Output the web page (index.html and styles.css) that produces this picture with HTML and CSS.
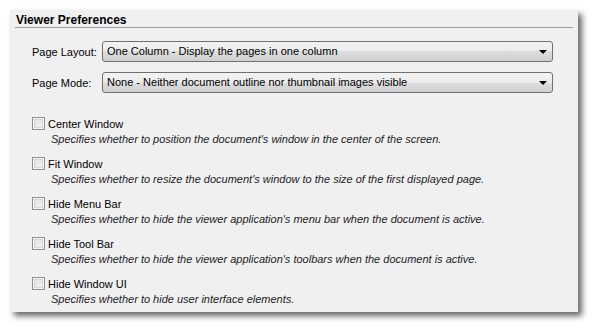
FILE: index.html
```html
<!DOCTYPE html>
<html>
    <head>
        <title>Viewer Preferences</title>
        <link rel="stylesheet" href="styles.css">
    </head>
    <body>
        <div class="panel">
            <div class="panel-title">Viewer Preferences</div>

            <div class="fields">
                <div class="field">
                    <label>Page Layout:</label>
                    <div class="combo"><span>One Column - Display the pages in one column</span><i class="arrow"></i></div>
                </div>
                <div class="field">
                    <label>Page Mode:</label>
                    <div class="combo"><span>None - Neither document outline nor thumbnail images visible</span><i class="arrow"></i></div>
                </div>
            </div>

            <ul class="options">
                <li>
                    <div class="opt-head"><span class="check"></span>Center Window</div>
                    <div class="opt-desc">Specifies whether to position the document's window in the center of the screen.</div>
                </li>
                <li>
                    <div class="opt-head"><span class="check"></span>Fit Window</div>
                    <div class="opt-desc">Specifies whether to resize the document's window to the size of the first displayed page.</div>
                </li>
                <li>
                    <div class="opt-head"><span class="check"></span>Hide Menu Bar</div>
                    <div class="opt-desc">Specifies whether to hide the viewer application's menu bar when the document is active.</div>
                </li>
                <li>
                    <div class="opt-head"><span class="check"></span>Hide Tool Bar</div>
                    <div class="opt-desc">Specifies whether to hide the viewer application's toolbars when the document is active.</div>
                </li>
                <li>
                    <div class="opt-head"><span class="check"></span>Hide Window UI</div>
                    <div class="opt-desc">Specifies whether to hide user interface elements.</div>
                </li>
            </ul>
        </div>
    </body>
</html>
```

FILE: styles.css
```css
html, body{
    height:100%;
}
body{
    margin:0;
    min-height:330px;
    background:#fff;
    font-family:"Liberation Sans", Arial, sans-serif;
    font-size:11px;
    color:#000;
    overflow:hidden;
}
.panel{
    margin:10px 0 0 10px;
    width:568px;
    height:302px;
    box-sizing:border-box;
    padding:0 5px;
    background:#f0f0f0;
    box-shadow:4px 4px 6px rgba(0,0,0,0.6);
}
.panel-title{
    padding:3px 0 0 1px;
    font-size:12px;
    font-weight:bold;
    line-height:14px;
    border-bottom:1px solid #a0a0a0;
}
.fields{
    margin-top:13px;
    padding-left:17px;
    display:flex;
    flex-direction:column;
    gap:10px;
}
.field{
    display:flex;
    align-items:center;
}
.field label{
    width:70px;
}
.combo{
    position:relative;
    width:451px;
    height:21px;
    box-sizing:border-box;
    border:1px solid #707070;
    border-radius:3px;
    padding-left:4px;
    line-height:19px;
    background:linear-gradient(#f3f3f3 0%, #ebebeb 50%, #dddddd 50%, #d0d0d0 100%);
}
.arrow{
    position:absolute;
    right:5px;
    top:8px;
    border-left:4px solid transparent;
    border-right:4px solid transparent;
    border-top:4px solid #000;
}
.options{
    list-style:none;
    margin:24px 0 0;
    padding:0 0 0 17px;
}
.options li{
    height:40px;
}
.opt-head{
    display:flex;
    align-items:center;
    gap:3px;
    height:13px;
    line-height:12px;
}
.check{
    width:13px;
    height:13px;
    box-sizing:border-box;
    border:1px solid #8e8f8f;
    background:linear-gradient(135deg, #dcdcdc, #f8f8f8);
    box-shadow:inset 0 0 0 1px #f4f4f4, inset 0 0 0 2px #d6d6d6;
}
.opt-desc{
    margin:2px 0 0 19px;
    line-height:14px;
    font-style:italic;
    color:#1c1c24;
}
```
